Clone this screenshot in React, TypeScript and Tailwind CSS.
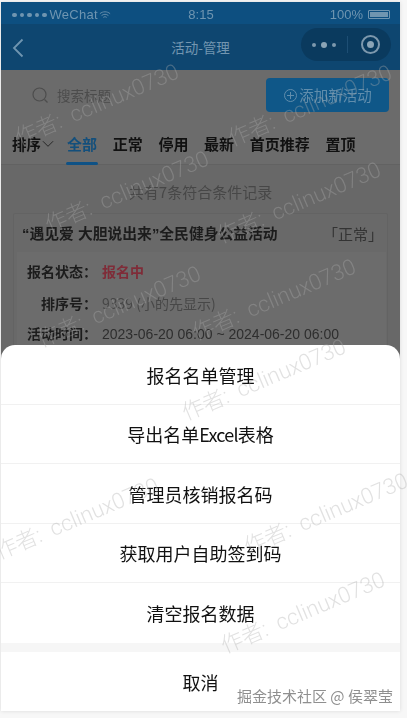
import React from "react";

const font = { fontFamily: '"Noto Sans CJK SC", sans-serif' };

const marks: [number, number][] = [
  [98, 105], [311, 106], [128, 192], [300, 203], [120, 307], [275, 300],
  [265, 380], [78, 519], [327, 514], [304, 613],
];

function Watermark({ x, y }: { x: number; y: number }) {
  return (
    <div
      className="absolute w-[180px] text-center whitespace-nowrap text-[22px] font-light leading-none text-[rgba(172,172,172,0.36)] -rotate-[23deg] font-['Roboto','Noto_Sans_CJK_SC',sans-serif]"
      style={{ left: x - 91, top: y - 11 }}
    >
      作者:&nbsp; cclinux0730
    </div>
  );
}

function Tab({ label, active }: { label: string; active?: boolean }) {
  return (
    <div className={`relative text-[15px] font-bold leading-[47px] h-[45px] ${active ? "text-[#134f7c]" : "text-[#111]"}`}>
      {label}
      {active && <div className="absolute left-[-1px] right-[-1px] bottom-0 h-[3px] rounded-full bg-[#0f5286]" />}
    </div>
  );
}

function InfoRow({ label, children, className }: { label: string; children: React.ReactNode; className?: string }) {
  return (
    <div className={`flex items-center ${className ?? ""}`}>
      <div className="w-[80px] text-right text-[14px] font-bold text-[#1c1c1c]">{label}</div>
      <div className="ml-[5px] text-[14px]">{children}</div>
    </div>
  );
}

function SheetItem({ children, last }: { children: React.ReactNode; last?: boolean }) {
  return (
    <div className={`h-[59.5px] flex items-center justify-center pt-[2px] text-[18px] text-[#111] ${last ? "" : "border-b border-[#f1f1f1]"}`}>
      {children}
    </div>
  );
}

export default function App() {
  return (
    <div className="relative h-[718px] w-[407px] overflow-hidden bg-[#f7f7f7]" style={font}>
      <div className="relative ml-[1px] mt-[2px] h-[709px] w-[399px] overflow-hidden bg-[#686868] shadow-[0_0_4px_rgba(0,0,0,0.12)]">
        <div className="blur-[0.6px]">
          {/* Status bar */}
          <div className="grid h-[22px] grid-cols-[1fr_auto_1fr] items-center bg-[#0d4f80] pl-[11px] pr-[10px] pt-[3px] text-[13px] text-[#6f95b0] font-['Liberation_Sans',sans-serif]">
            <div className="flex items-center gap-[3px]">
              <div className="flex gap-[3px]">
                {[0, 1, 2, 3, 4].map((i) => (
                  <span key={i} className="h-[4.500px] w-[4.500px] rounded-full bg-[#6f95b0]" />
                ))}
              </div>
              <span className="tracking-[0.3px]">WeChat</span>
              <svg className="ml-[-2px]" width="12" height="10" viewBox="0 0 14 11" fill="none" stroke="#6f95b0" strokeWidth="1">
                <path d="M1 4c3.400-3 8.600-3 12 0M3 6.200c2.300-2 5.700-2 8 0M5 8.300c1.200-1 2.800-1 4 0" />
              </svg>
            </div>
            <span>8:15</span>
            <div className="flex items-center justify-end gap-[5px]">
              <span>100%</span>
              <div className="flex h-[9px] w-[22px] items-center rounded-[1px] border border-[#6f95b0] p-[1px]">
                <div className="h-full w-full bg-[#6f95b0]" />
              </div>
            </div>
          </div>
          {/* Nav bar */}
          <div className="relative flex h-[46px] items-center justify-center bg-[#0e4670] text-[13.5px] text-[#7396b0]">
            <svg className="absolute left-[11px] top-[14px]" width="12" height="20" viewBox="0 0 12 20" fill="none" stroke="#6f95b0" strokeWidth="1.800">
              <path d="M10.500 1.500 2 10l8.500 8.500" />
            </svg>
            <span>活动-管理</span>
            <div className="absolute left-[300px] top-[4px] flex h-[33px] w-[90px] items-center rounded-full bg-[#0a3a5e]">
              <div className="ml-[11px] flex w-[24px] items-center justify-between">
                <span className="h-[4px] w-[4px] rounded-full bg-[#7d98ad]" />
                <span className="h-[6px] w-[6px] rounded-full bg-[#8ba4b6]" />
                <span className="h-[4px] w-[4px] rounded-full bg-[#7d98ad]" />
              </div>
              <div className="ml-[11px] h-[17px] w-px bg-[#1d4e74]" />
              <div className="ml-[13px] flex h-[19px] w-[19px] items-center justify-center rounded-full border-[2.500px] border-[#7d98ad]">
                <span className="h-[7px] w-[7px] rounded-full bg-[#8ba4b6]" />
              </div>
            </div>
          </div>
          {/* Search row */}
          <div className="flex h-[50px] items-center bg-[#6b6b6b] pl-[31px] pr-[11px]">
            <svg width="17" height="17" viewBox="0 0 17 17" fill="none" stroke="#4d4d4d" strokeWidth="1.200">
              <circle cx="7.500" cy="7.500" r="6.500" />
              <path d="m12.500 12.500 3 3" />
            </svg>
            <span className="ml-[8px] text-[13.500px] text-[#4c4c4c]">搜索标题</span>
            <div className="ml-auto flex h-[34px] w-[123px] items-center justify-center gap-[1px] rounded-[4px] bg-[#0f5788] text-[14.500px] text-[#608dac]">
              <svg width="15" height="15" viewBox="0 0 15 15" fill="none" stroke="#608dac" strokeWidth="1">
                <circle cx="7.500" cy="7.500" r="6" />
                <path d="M7.500 4v7M4 7.500h7" />
              </svg>
              <span>添加新活动</span>
            </div>
          </div>
          {/* Tabs */}
          <div className="flex h-[45px] items-start border-b border-[#626262] bg-[#6c6c6c] pl-[11px]">
            <div className="flex h-[45px] w-[55px] items-center pt-[2px] text-[14.500px] font-bold text-[#111]">
              排序
              <svg className="ml-[1px]" width="12" height="8" viewBox="0 0 13 8" fill="none" stroke="#222" strokeWidth="1">
                <path d="m1 1 5.500 5.500L12 1" />
              </svg>
            </div>
            <div className="flex gap-[15.700px]">
              <Tab label="全部" active />
              <Tab label="正常" />
              <Tab label="停用" />
              <Tab label="最新" />
              <Tab label="首页推荐" />
              <Tab label="置顶" />
            </div>
          </div>
          {/* Count */}
          <div className="flex h-[48px] items-center justify-center pt-[6px] text-[15px] text-[#474747]">共有7条符合条件记录</div>
          {/* Card */}
          <div className="mx-[12px] h-[200px] rounded-[2px] border border-[#636363] bg-[#696969] pb-[3px] pl-[3px] pr-[1px]">
            <div className="flex h-[38px] items-center justify-between pl-[5px] pr-[3px] pt-[2px]">
              <div className="text-[14.800px] font-bold text-[#1c1c1c] font-['Liberation_Sans','Noto_Sans_CJK_SC',sans-serif]">“遇见爱 大胆说出来”全民健身公益活动</div>
              <div className="text-[15px] text-[#333]">「正常」</div>
            </div>
            <div className="flex flex-col bg-[#6c6c6c] pt-[3px]">
              <InfoRow label="报名状态：" className="h-[32px]">
                <span className="font-bold text-[#7f2c38]">报名中</span>
              </InfoRow>
              <InfoRow label="排序号：" className="h-[32px]">
                <span className="text-[#474747]">9339 (小的先显示)</span>
              </InfoRow>
              <InfoRow label="活动时间：" className="h-[29px]">
                <span className="text-[#2e2e2e] font-['Liberation_Sans',sans-serif]">2023-06-20 06:00 ~ 2024-06-20 06:00</span>
              </InfoRow>
            </div>
          </div>
        </div>
        {/* Action sheet */}
        <div className="absolute inset-x-0 bottom-0 h-[366px] overflow-hidden rounded-t-[14px] bg-white">
          <SheetItem>报名名单管理</SheetItem>
          <SheetItem>
            导出名单<span className="tracking-[-0.8px]">Excel</span>表格
          </SheetItem>
          <SheetItem>管理员核销报名码</SheetItem>
          <SheetItem>获取用户自助签到码</SheetItem>
          <SheetItem last>清空报名数据</SheetItem>
          <div className="h-[9px] bg-[#f6f6f6]" />
          <div className="flex h-[59px] items-center justify-center pt-[2px] text-[18px] text-[#111]">取消</div>
        </div>
      </div>
      {/* Watermarks */}
      {marks.map(([x, y]) => (
        <Watermark key={`${x}-${y}`} x={x} y={y} />
      ))}
      <div className="absolute left-[237px] top-[685px] text-[15px] text-[#8f8f8f] [text-shadow:0_0_1px_rgba(255,255,255,0.8)]">
        掘金技术社区 @ 侯翠莹
      </div>
    </div>
  );
}
